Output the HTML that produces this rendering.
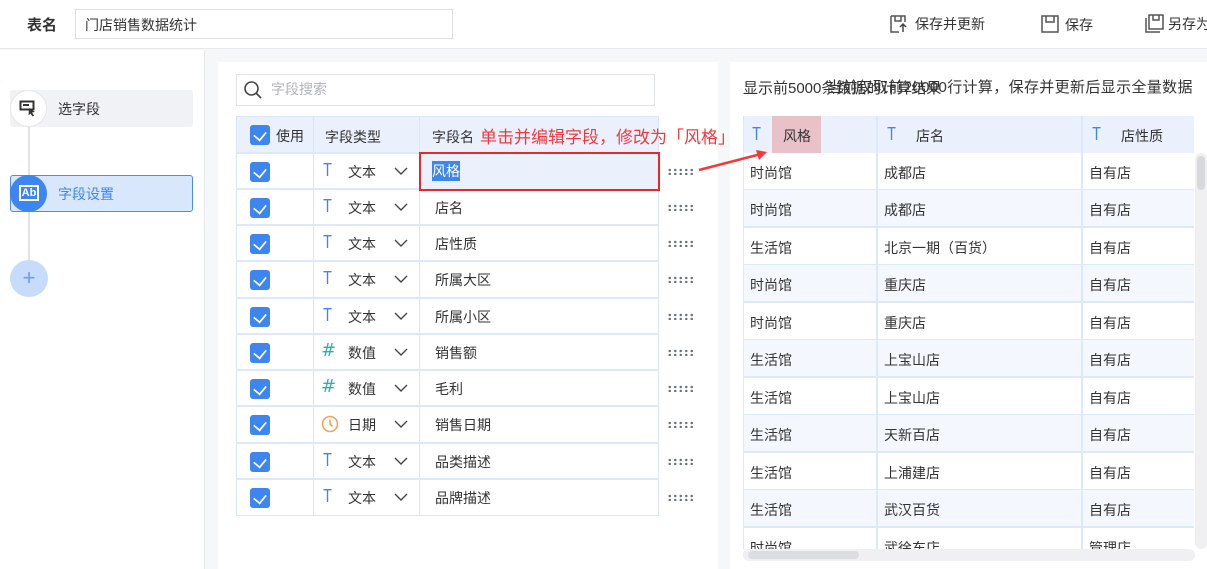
<!DOCTYPE html>
<html><head><meta charset="utf-8"><style>
*{box-sizing:border-box;margin:0;padding:0}
body{width:1207px;height:569px;overflow:hidden;background:#f6f7f9;font-family:"Liberation Sans","Noto Sans CJK SC",sans-serif;font-size:14px;color:#333;position:relative}
.a{position:absolute}
.cb{position:absolute;width:20px;height:20px;background:#3d86f0;border-radius:3px}
.cb:after{content:"";position:absolute;left:5px;top:3px;width:8px;height:11px;border:solid #fff;border-width:0 2px 2px 0;transform:rotate(40deg) scale(.85)}
.ti{position:absolute;font-size:18px;color:#3d86f0;font-family:"Liberation Sans",sans-serif;transform:scaleX(.8)}
.hs{position:absolute;font-size:18px;color:#2bb5a5;font-family:"DejaVu Sans",sans-serif;font-style:italic}
.dots{position:absolute;left:667px;width:28px;height:7px;background-image:radial-gradient(circle,#6a7280 1.1px,transparent 1.4px);background-size:5.5px 4px}
.hl{position:absolute;left:236px;width:423px;height:2px;background:#dde9f9}
.rr{position:absolute;left:743px;width:451px;height:38px;border-bottom:2px solid #dde9f9}
.rr span{position:absolute;top:10px}
.vl{position:absolute;top:116px;width:2px;height:433px;background:#dde9f9}
.chev{position:absolute;left:394px}
</style></head><body>
<div class="a" style="left:0;top:0;width:1207px;height:49px;background:#fff;border-bottom:1px solid #e6e8ec"></div>
<div class="a" style="left:27px;top:14px;font-weight:bold;font-size:15px">表名</div>
<div class="a" style="left:75px;top:9px;width:378px;height:30px;border:1px solid #dcdfe6;background:#fff;padding:5px 9px;font-size:14px">门店销售数据统计</div>
<svg class="a" style="left:889px;top:14px" width="20" height="20" viewBox="0 0 20 20" fill="none" stroke="#555" stroke-width="1.5"><path d="M2 2h14v6M2 2v16h8M6 2v5h6V2"/><path d="M14 18v-8M11 13l3-3 3 3" stroke="#444"/></svg>
<div class="a" style="left:915px;top:14px">保存并更新</div>
<svg class="a" style="left:1040px;top:14px" width="20" height="20" viewBox="0 0 20 20" fill="none" stroke="#555" stroke-width="1.5"><path d="M2 2h16v16H2zM6 2v6h8V2"/></svg>
<div class="a" style="left:1065px;top:15px">保存</div>
<svg class="a" style="left:1144px;top:13px" width="20" height="20" viewBox="0 0 20 20" fill="none" stroke="#555" stroke-width="1.5"><path d="M5 2h14v14H5zM9 2v5h6V2M2 5v14h14"/></svg>
<div class="a" style="left:1168px;top:14px;white-space:nowrap">另存为</div>

<div class="a" style="left:0;top:50px;width:205px;height:519px;background:#fff;border-right:1px solid #e6e8ec"></div>
<div class="a" style="left:28px;top:110px;width:2px;height:160px;background:#dfe3e8"></div>
<div class="a" style="left:10px;top:90px;width:183px;height:37px;background:#f1f2f6;border-radius:3px"></div>
<div class="a" style="left:10px;top:90px;width:37px;height:37px;border-radius:50%;background:#fff;border:1px solid #e4e6ea"></div>
<svg class="a" style="left:19px;top:99px" width="20" height="20" viewBox="0 0 20 20"><rect x="1.5" y="2.5" width="13" height="8" fill="none" stroke="#333" stroke-width="2"/><rect x="4" y="5" width="6" height="2" fill="#333"/><path d="M10 9l6 4-3 .5 2 3-1.5 1-2-3-2 2z" fill="#333"/></svg>
<div class="a" style="left:58px;top:99px">选字段</div>
<div class="a" style="left:10px;top:175px;width:183px;height:37px;background:#d8e7fc;border:1px solid #4a8cf0;border-radius:3px"></div>
<div class="a" style="left:10px;top:175px;width:37px;height:37px;border-radius:50%;background:#3d86f0"></div>
<div class="a" style="left:19px;top:185px;width:20px;height:16px;border:2px solid #fff;color:#fff;font-size:11px;font-weight:bold;line-height:12px;text-align:center;font-family:'Liberation Sans'">Ab</div>
<div class="a" style="left:58px;top:184px;color:#3d86f0">字段设置</div>
<div class="a" style="left:10px;top:260px;width:38px;height:37px;border-radius:50%;background:#c6dcfa;color:#6b9ff0;font-size:22px;text-align:center;line-height:35px">+</div>

<div class="a" style="left:218px;top:62px;width:500px;height:507px;background:#fff"></div>
<div class="a" style="left:236px;top:74px;width:419px;height:32px;border:1px solid #e1e4ea"></div>
<svg class="a" style="left:243px;top:80px" width="20" height="20" viewBox="0 0 20 20" fill="none" stroke="#444" stroke-width="1.6"><circle cx="8.5" cy="8.5" r="6.5"/><path d="M13 13l5 5"/></svg>
<div class="a" style="left:271px;top:79px;color:#b0b3b8">字段搜索</div>
<div class="a" style="left:236px;top:116px;width:423px;height:37px;background:#eaf1fc"></div>
<div class="a" style="left:236px;top:116px;width:423px;height:400px;border:1px solid #d9e6f7"></div>
<div class="a" style="left:313px;top:116px;width:1px;height:400px;background:#d9e6f7"></div>
<div class="a" style="left:419px;top:116px;width:1px;height:400px;background:#d9e6f7"></div>
<div class="hl" style="top:152px"></div><div class="hl" style="top:188px"></div><div class="hl" style="top:224px"></div><div class="hl" style="top:260px"></div><div class="hl" style="top:297px"></div><div class="hl" style="top:333px"></div><div class="hl" style="top:369px"></div><div class="hl" style="top:405px"></div><div class="hl" style="top:442px"></div><div class="hl" style="top:478px"></div>

<div class="cb" style="left:250px;top:125px"></div>
<div class="a" style="left:276px;top:126px">使用</div>
<div class="a" style="left:325px;top:127px">字段类型</div>
<div class="a" style="left:432px;top:127px">字段名</div>
<div class="a" style="left:480px;top:123px;color:#f03a3a;font-size:17px;white-space:nowrap">单击并编辑字段，修改为「风格」</div>

<div class="a" style="left:419px;top:152px;width:241px;height:39px;border:2px solid #e8262b;background:#eaf1fc"></div>
<div class="a" style="left:432px;top:161px;background:#3d86f0;color:#fff;line-height:20px">风格</div>

<svg width="0" height="0" style="position:absolute"><defs><symbol id="cv" viewBox="0 0 14 8"><path d="M1 1l6 6 6-6" fill="none" stroke="#444" stroke-width="1.4"/></symbol></defs></svg>
<div class="cb" style="left:250px;top:162px"></div><div class="ti" style="left:322px;top:160px">T</div><div class="a" style="left:348px;top:162px">文本</div><svg class="chev" style="top:167px" width="14" height="8"><use href="#cv"/></svg><div class="dots" style="top:168px"></div>
<div class="cb" style="left:250px;top:198px"></div><div class="ti" style="left:322px;top:196px">T</div><div class="a" style="left:348px;top:198px">文本</div><svg class="chev" style="top:203px" width="14" height="8"><use href="#cv"/></svg><div class="a" style="left:435px;top:198px">店名</div><div class="dots" style="top:204px"></div>
<div class="cb" style="left:250px;top:234px"></div><div class="ti" style="left:322px;top:232px">T</div><div class="a" style="left:348px;top:234px">文本</div><svg class="chev" style="top:239px" width="14" height="8"><use href="#cv"/></svg><div class="a" style="left:435px;top:234px">店性质</div><div class="dots" style="top:240px"></div>
<div class="cb" style="left:250px;top:270px"></div><div class="ti" style="left:322px;top:268px">T</div><div class="a" style="left:348px;top:270px">文本</div><svg class="chev" style="top:275px" width="14" height="8"><use href="#cv"/></svg><div class="a" style="left:435px;top:270px">所属大区</div><div class="dots" style="top:276px"></div>
<div class="cb" style="left:250px;top:307px"></div><div class="ti" style="left:322px;top:305px">T</div><div class="a" style="left:348px;top:307px">文本</div><svg class="chev" style="top:312px" width="14" height="8"><use href="#cv"/></svg><div class="a" style="left:435px;top:307px">所属小区</div><div class="dots" style="top:313px"></div>
<div class="cb" style="left:250px;top:343px"></div><div class="hs" style="left:321px;top:340px">#</div><div class="a" style="left:348px;top:343px">数值</div><svg class="chev" style="top:348px" width="14" height="8"><use href="#cv"/></svg><div class="a" style="left:435px;top:343px">销售额</div><div class="dots" style="top:349px"></div>
<div class="cb" style="left:250px;top:379px"></div><div class="hs" style="left:321px;top:376px">#</div><div class="a" style="left:348px;top:379px">数值</div><svg class="chev" style="top:384px" width="14" height="8"><use href="#cv"/></svg><div class="a" style="left:435px;top:379px">毛利</div><div class="dots" style="top:385px"></div>
<div class="cb" style="left:250px;top:415px"></div><svg class="a" style="left:321px;top:415px" width="18" height="18" viewBox="0 0 18 18" fill="none" stroke="#f5a25d" stroke-width="1.6"><circle cx="9" cy="9" r="7.5"/><path d="M9 4.5V9l2.5 2.5"/></svg><div class="a" style="left:348px;top:415px">日期</div><svg class="chev" style="top:420px" width="14" height="8"><use href="#cv"/></svg><div class="a" style="left:435px;top:415px">销售日期</div><div class="dots" style="top:421px"></div>
<div class="cb" style="left:250px;top:452px"></div><div class="ti" style="left:322px;top:450px">T</div><div class="a" style="left:348px;top:452px">文本</div><svg class="chev" style="top:457px" width="14" height="8"><use href="#cv"/></svg><div class="a" style="left:435px;top:452px">品类描述</div><div class="dots" style="top:458px"></div>
<div class="cb" style="left:250px;top:488px"></div><div class="ti" style="left:322px;top:486px">T</div><div class="a" style="left:348px;top:488px">文本</div><svg class="chev" style="top:493px" width="14" height="8"><use href="#cv"/></svg><div class="a" style="left:435px;top:488px">品牌描述</div><div class="dots" style="top:494px"></div>

<div class="a" style="left:730px;top:62px;width:477px;height:507px;background:#fff"></div>
<div class="a" style="left:743px;top:77px;white-space:nowrap;font-size:15px">显示前5000条数据的计算结果</div>
<div class="a" style="left:827px;top:76px;white-space:nowrap;font-size:15px;letter-spacing:0.35px">当前仅取前20000行计算，保存并更新后显示全量数据</div>
<div class="a" style="left:743px;top:116px;width:451px;height:37px;background:#eaf1fc"></div>
<div class="a" style="left:772px;top:116px;width:49px;height:37px;background:#e8c2c8"></div>
<div class="ti" style="left:751px;top:124px">T</div><div class="a" style="left:783px;top:126px">风格</div>
<div class="ti" style="left:886px;top:124px">T</div><div class="a" style="left:916px;top:126px">店名</div>
<div class="ti" style="left:1091px;top:124px">T</div><div class="a" style="left:1121px;top:126px">店性质</div>
<div class="rr" style="top:153px;background:#fff"><span style="left:7px">时尚馆</span><span style="left:141px">成都店</span><span style="left:346px">自有店</span></div>
<div class="rr" style="top:190px;background:#f4f8fe"><span style="left:7px">时尚馆</span><span style="left:141px">成都店</span><span style="left:346px">自有店</span></div>
<div class="rr" style="top:228px;background:#fff"><span style="left:7px">生活馆</span><span style="left:141px">北京一期（百货）</span><span style="left:346px">自有店</span></div>
<div class="rr" style="top:265px;background:#f4f8fe"><span style="left:7px">时尚馆</span><span style="left:141px">重庆店</span><span style="left:346px">自有店</span></div>
<div class="rr" style="top:303px;background:#fff"><span style="left:7px">时尚馆</span><span style="left:141px">重庆店</span><span style="left:346px">自有店</span></div>
<div class="rr" style="top:340px;background:#f4f8fe"><span style="left:7px">生活馆</span><span style="left:141px">上宝山店</span><span style="left:346px">自有店</span></div>
<div class="rr" style="top:378px;background:#fff"><span style="left:7px">生活馆</span><span style="left:141px">上宝山店</span><span style="left:346px">自有店</span></div>
<div class="rr" style="top:415px;background:#f4f8fe"><span style="left:7px">生活馆</span><span style="left:141px">天新百店</span><span style="left:346px">自有店</span></div>
<div class="rr" style="top:453px;background:#fff"><span style="left:7px">生活馆</span><span style="left:141px">上浦建店</span><span style="left:346px">自有店</span></div>
<div class="rr" style="top:490px;background:#f4f8fe"><span style="left:7px">生活馆</span><span style="left:141px">武汉百货</span><span style="left:346px">自有店</span></div>
<div class="rr" style="top:528px;background:#fff;height:21px;overflow:hidden;border:none"><span style="left:7px">时尚馆</span><span style="left:141px">武徐东店</span><span style="left:346px">管理店</span></div>
<div class="vl" style="left:743px;width:1px"></div><div class="vl" style="left:876px"></div><div class="vl" style="left:1081px"></div>
<div class="a" style="left:1195px;top:153px;width:12px;height:396px;background:#f0f0f2;border-radius:6px"></div>
<div class="a" style="left:1197px;top:156px;width:8px;height:34px;background:#d8d9dd;border-radius:4px"></div>
<div class="a" style="left:743px;top:549px;width:452px;height:12px;background:#f0f0f2;border-radius:6px"></div>
<div class="a" style="left:748px;top:551px;width:111px;height:8px;background:#dcdde1;border-radius:4px"></div>

<svg class="a" style="left:695px;top:140px" width="80" height="40"><path d="M4 30L66 14" stroke="#ef3b3b" stroke-width="2.5"/><path d="M72 12l-11 -2 3 10z" fill="#ef3b3b"/></svg>
</body></html>
